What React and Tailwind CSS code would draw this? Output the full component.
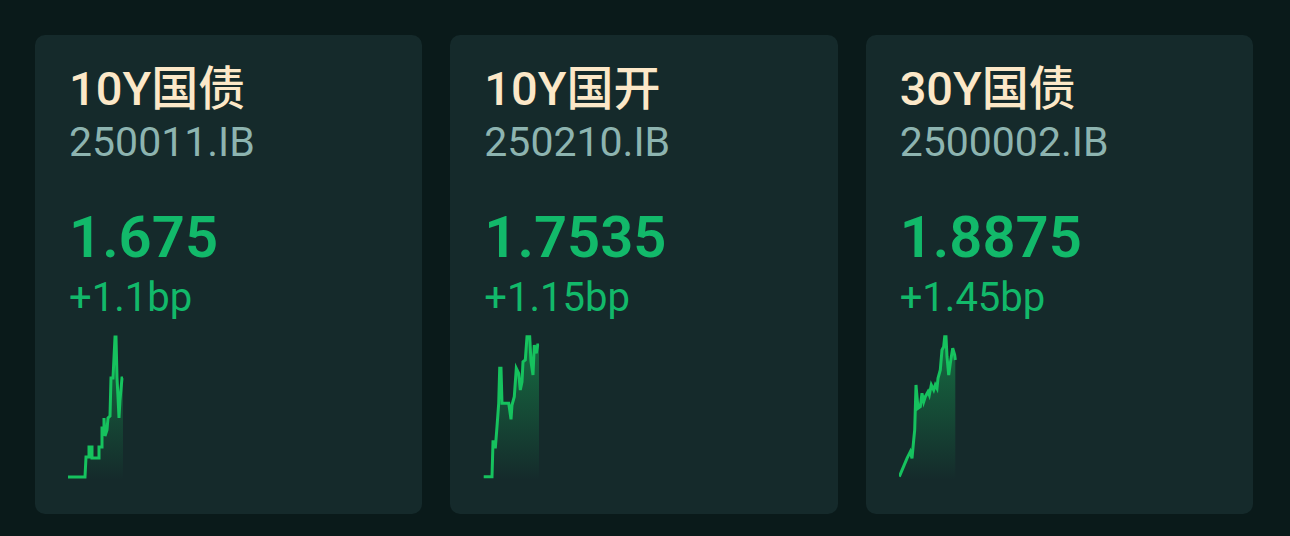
import React from "react";

const cards = [
  {
    title: "10Y国债",
    code: "250011.IB",
    price: "1.675",
    change: "+1.1bp",
    pts: [[0,142],[17,142],[18,122],[21,122],[21,112],[24,112],[24,123],[31,123],[31,112],[34,112],[34,93],[36,93],[36,83],[37,101],[39,95],[40,83],[42,81],[43,43],[45,43],[47,2],[48,2],[49,43],[50,62],[51,83],[52,65],[54,43],[55,43]],
  },
  {
    title: "10Y国开",
    code: "250210.IB",
    price: "1.7535",
    change: "+1.15bp",
    pts: [[0.7,141.7],[9,141.7],[10,106.7],[11.3,106.7],[12.3,113.3],[14,91.7],[15.7,68.3],[16.7,33.3],[18,33.3],[19,68.3],[25.7,68.3],[26.7,75],[28,84.3],[29,70],[31.3,61.7],[33.3,33.3],[35.7,38.3],[37.3,55],[39,46.7],[40,26.7],[42.3,25],[44,1.7],[46.7,1.7],[48,26.7],[50,40],[51.3,10],[53.3,18.3],[54.7,10],[56,10]],
  },
  {
    title: "30Y国债",
    code: "2500002.IB",
    price: "1.8875",
    change: "+1.45bp",
    pts: [[0.3,141.7],[8,123.3],[11.3,116.7],[13,123.3],[14.7,105],[15.7,95],[17,50],[19,73.3],[21.3,71.7],[23,58.3],[24.7,66.7],[26.3,61.7],[29,56.7],[30.3,60],[32.3,50],[34.7,55],[36.3,50],[38,53.3],[39,43.3],[41.3,35],[43,15],[44.7,11.7],[45.7,1.7],[47,1.7],[48,21.7],[49.7,40],[51.3,28.3],[53.7,13.3],[55.7,20],[56.3,25]],
  },
];

function Spark({ pts, id }) {
  const line = pts.map((p) => p.join(",")).join(" ");
  const first = pts[0];
  const last = pts[pts.length - 1];
  const area = `${first[0]},145 ${line} ${last[0]},145`;
  return (
    <svg width="64" height="146" viewBox="0 0 64 146" className="block">
      <defs>
        <linearGradient id={id} x1="0" y1="0" x2="0" y2="1">
          <stop offset="0%" stopColor="#16c25e" stopOpacity="0.45" />
          <stop offset="100%" stopColor="#16c25e" stopOpacity="0" />
        </linearGradient>
      </defs>
      <polygon points={area} fill={`url(#${id})`} />
      <polyline points={line} fill="none" stroke="#16c25e" strokeWidth="3" strokeLinejoin="miter" />
    </svg>
  );
}

export default function App() {
  return (
    <div
      className="w-[1290px] h-[536px] bg-[#0a1a1a] pl-[35px] pr-[37px] pt-[35px] grid grid-cols-3 gap-[28px] items-start"
      style={{ fontFamily: 'Roboto, "Noto Sans CJK SC", sans-serif' }}
    >
      {cards.map((c, i) => (
        <div key={i} className="h-[479px] rounded-[10px] bg-[#152a2b] px-[34px] pt-[30px] flex flex-col">
          <div className="text-[47px] leading-[48px] font-medium text-[#fce8c8]">{c.title}</div>
          <div className="mt-[5px] text-[41px] leading-[48px] text-[#8db4b0]">{c.code}</div>
          <div className="mt-[39px] text-[58px] leading-[64px] font-semibold text-[#12b96a]">{c.price}</div>
          <div className="mt-[7px] text-[40px] leading-[44px] text-[#12b96a]">{c.change}</div>
          <div className="mt-[15px] -ml-[1px]">
            <Spark pts={c.pts} id={`g${i}`} />
          </div>
        </div>
      ))}
    </div>
  );
}
